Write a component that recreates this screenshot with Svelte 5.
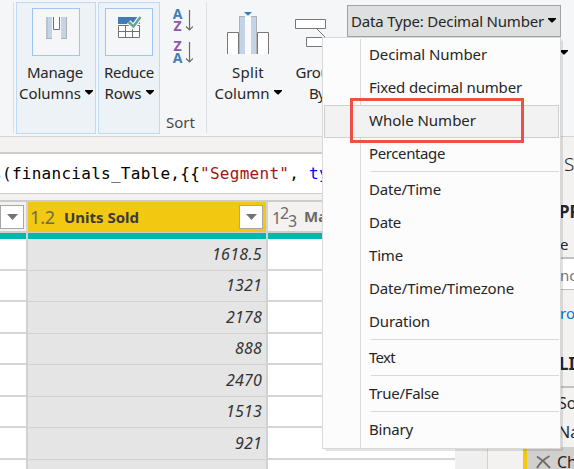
<script>
  // Spreads or tightens a label so that it takes up exactly the given width.
  function fit(node, width) {
    const natural = node.getBoundingClientRect().width;
    const count = node.textContent.length;
    if (count) node.style.letterSpacing = `${(width - natural) / count}px`;
  }

  const menu = [
    { label: 'Decimal Number', w: 118 },
    { label: 'Fixed decimal number', w: 153 },
    { label: 'Whole Number', w: 107, active: true },
    { label: 'Percentage', w: 76 },
    null,
    { label: 'Date/Time', w: 72 },
    { label: 'Date', w: 32 },
    { label: 'Time', w: 34 },
    { label: 'Date/Time/Timezone', w: 145 },
    { label: 'Duration', w: 61 },
    null,
    { label: 'Text', w: 26 },
    null,
    { label: 'True/False', w: 70 },
    null,
    { label: 'Binary', w: 44 }
  ];

  const rows = [
    { v: '1618.5', w: 50 },
    { v: '1321', w: 36 },
    { v: '2178', w: 36 },
    { v: '888', w: 27 },
    { v: '2470', w: 36 },
    { v: '1513', w: 36 },
    { v: '921', w: 27 },
    { v: '', w: 0 }
  ];
</script>

{#snippet caret()}
  <svg class="caret" width="8" height="5" viewBox="0 0 8 5"><path d="M0 0h8v1L4.5 4.5h-1L0 1z" fill="#000" /></svg>
{/snippet}

{#snippet filter()}
  <span class="filter"><svg width="11" height="6" viewBox="0 0 11 6"><path d="M0 0h11L5.5 6z" fill="#737373" /></svg></span>
{/snippet}

{#snippet sort(first, second)}
  <div class="sort-icon">
    <div class="letters"><b class={first}>{first}</b><b class={second}>{second}</b></div>
    <svg width="8" height="23" viewBox="0 0 8 23"><path d="M4.5 1v20M1 17.5l3.5 3.5L8 17.5" fill="none" stroke="#6a6a6a" stroke-width="1.2" /></svg>
  </div>
{/snippet}

<div class="page">
  <header class="ribbon">
    <div class="edge"></div>
    <div class="tile manage">
      <div class="icon-box">
        <svg width="46" height="46" viewBox="0 0 46 46">
          <path d="M13 8h6v22h-6zM28 8h6v22h-6z" fill="#c3d3e8" />
          <path d="M14 8v22M13 29.5h6M33.5 8v22M28 29.5h6" stroke="#b1b1b1" fill="none" />
          <path d="M20.5 8v12.5h6V8" fill="#fff" stroke="#6f6f6f" />
        </svg>
      </div>
      <div class="line"><span use:fit={56}>Manage</span></div>
      <div class="line"><span use:fit={62}>Columns</span>{@render caret()}</div>
    </div>
    <div class="tile reduce">
      <div class="icon-box">
        <svg width="46" height="46" viewBox="0 0 46 46">
          <path d="M12 8h22v7H12z" fill="#427bb5" />
          <path d="M12.5 16.5h21v12h-21zM12.5 22.5h21M19.5 16.5v12M26.5 16.5v12" fill="#fff" stroke="#717171" />
          <path d="M22.5 13l5 4.5 7-9.5" fill="none" stroke="#f4f6f8" stroke-width="5" />
          <path d="M22.5 13l5 4.5 7-9.5" fill="none" stroke="#63a58d" stroke-width="2.4" />
        </svg>
      </div>
      <div class="line"><span use:fit={50}>Reduce</span></div>
      <div class="line"><span use:fit={37}>Rows</span>{@render caret()}</div>
    </div>
    <div class="sort-group">
      {@render sort('A', 'Z')}
      {@render sort('Z', 'A')}
      <span class="group-name" use:fit={29}>Sort</span>
    </div>
    <div class="edge"></div>
    <div class="plain split">
      <svg width="42" height="42" viewBox="0 0 42 42">
        <path d="M.5 42V20.500h11V42M30.500 42V20.500h11V42" fill="#fff" stroke="#777" />
        <path d="M12 4h6v38h-6zM24 4h6v38h-6z" fill="#c3d3e8" />
        <path d="M18 5h6v37h-6z" fill="#fafafa" />
        <path d="M12.500 42V4.500H18M24 4.500h5.500V42" fill="none" stroke="#b1b1b1" />
        <path d="M17 0h8l-4 3.800z" fill="#3c7bb8" />
      </svg>
      <div class="line"><span use:fit={32}>Split</span></div>
      <div class="line"><span use:fit={55}>Column</span>{@render caret()}</div>
    </div>
    <div class="plain group">
      <svg width="44" height="42" viewBox="0 0 44 42">
        <path d="M22 17l10 10" stroke="#777" />
        <path d="M.5 7.500h30v9H.5zM11.500 25.500h30v9h-30z" fill="#fff" stroke="#777" />
      </svg>
      <div class="line"><span use:fit={43}>Group</span></div>
      <div class="line"><span use:fit={16}>By</span></div>
    </div>
    <div class="typing">
      <div class="type-button"><span use:fit={193}>Data Type: Decimal Number</span>{@render caret()}</div>
      <div class="second-caret">{@render caret()}</div>
    </div>
  </header>

  <main>
    <section class="left">
      <div class="formula"><i>s</i>(financials_Table,&#123;&#123;<em>"Segment"</em>, <strong>type</strong></div>
      <div class="sheet">
        <div class="col narrow">
          <div class="head">{@render filter()}</div>
          <div class="teal"></div>
          {#each rows as _}<div class="cell"></div>{/each}
        </div>
        <div class="col units">
          <div class="head">
            <span class="kind" use:fit={25}>1.2</span>
            <span class="name" use:fit={75}>Units Sold</span>
            {@render filter()}
          </div>
          <div class="teal"></div>
          {#each rows as r}<div class="cell"><span use:fit={r.w}>{r.v}</span></div>{/each}
        </div>
        <div class="col next">
          <div class="head">
            <span class="kind whole"><span>1</span><span class="up">2</span><span class="down">3</span></span>
            <span class="name">Manufacturing</span>
          </div>
          <div class="teal"></div>
          {#each rows as _}<div class="cell"></div>{/each}
        </div>
        <div class="scroll"></div>
      </div>
    </section>
    <aside>
      <div class="title">Settings</div>
      <div class="caps props">PROPERTIES</div>
      <div class="field-name">e</div>
      <div class="field">ncials</div>
      <div class="link">roperties</div>
      <div class="caps steps">LIED STEPS</div>
      <div class="step">Source</div>
      <div class="step">Navigation</div>
      <div class="step current">
        <svg width="15" height="14" viewBox="0 0 15 14"><path d="M1 1.500C5 4 10 8 14 13M13.500 1C9 3.500 4 8 1 13" fill="none" stroke="#6d6c6b" stroke-width="2" /></svg>
        <span>Changed</span>
      </div>
    </aside>
  </main>

  <div class="menu">
    {#each menu as item}
      {#if item}
        <div class="item" class:active={item.active}><span use:fit={item.w}>{item.label}</span></div>
      {:else}
        <div class="sep"></div>
      {/if}
    {/each}
  </div>
  <div class="callout"></div>
</div>

<style>
  .page {
    position: relative;
    width: 574px;
    height: 469px;
    overflow: hidden;
    background: #f3f2f1;
    color: #262626;
    font: 15px/21px "Noto Sans", "Open Sans", sans-serif;
    white-space: nowrap;
  }
  .page :global(*) { box-sizing: border-box; }
  svg { display: block; flex: none; }
  span { display: inline-block; flex: none; }

  .ribbon {
    display: flex;
    align-items: flex-start;
    height: 137px;
    padding: 2px 0 0 13px;
    background: #f5f6f8;
    border-bottom: 1px solid #d4d4d4;
    overflow: hidden;
  }
  .edge { flex: none; width: 1px; height: 131px; background: #dedfe1; }
  .tile {
    flex: none;
    display: flex;
    flex-direction: column;
    align-items: center;
    height: 132px;
    padding-top: 5px;
    background: #edf2f6;
    border: 1px solid #bddaf6;
  }
  .manage { width: 80px; margin-left: 2px; }
  .reduce { width: 62px; margin-left: 2px; }
  .icon-box { width: 48px; height: 48px; margin-bottom: 6px; border: 1px solid #9cc6f1; background: #f4f6f8; }
  .line { display: flex; justify-content: center; align-items: center; gap: 4px; height: 21px; }
  .manage .line { margin-left: -2px; }
  .manage .line:last-child { margin-left: 0; }
  .reduce .line:last-child { margin-left: 0; }
  .caret { margin-top: -3px; }

  .sort-group { flex: none; width: 46px; height: 134px; padding: 6px 0 0 12px; }
  .sort-icon { display: flex; align-items: center; gap: 2px; height: 24px; margin-bottom: 8px; }
  .letters { display: flex; flex-direction: column; align-items: center; width: 11px; font-size: 14px; line-height: 12px; }
  .A { color: #457eb5; }
  .Z { color: #8c58ae; }
  .group-name { margin: 40px 0 0 -6px; color: #4a4a4a; }
  .plain { flex: none; display: flex; flex-direction: column; align-items: center; padding-top: 10px; }
  .plain svg:first-child { margin-bottom: 8px; }
  .split { width: 82px; }
  .group { width: 56px; padding-left: 0; }
  .typing { flex: none; margin-left: 2px; padding-top: 3px; }
  .type-button {
    display: flex;
    align-items: center;
    gap: 4px;
    width: 214px;
    height: 32px;
    padding: 0 0 0 3px;
    background: #dee0e0;
    border: 1px solid #a0a3a5;
  }
  .type-button .caret { margin-top: -2px; }
  .second-caret { display: flex; justify-content: flex-end; width: 221px; padding-top: 16px; }

  main { display: flex; height: 332px; }
  .left { flex: none; display: flex; flex-direction: column; width: 488px; padding-top: 15px; border-right: 1px solid #d3d2d1; }
  .formula {
    height: 42px;
    margin-bottom: 6px;
    background: #fff;
    border-top: 2px solid #ccc;
    border-bottom: 1px solid #ccc;
    color: #000;
    font: 16px/40px "DejaVu Sans Mono", monospace;
    letter-spacing: .27px;
    overflow: hidden;
  }
  .formula i { display: inline-block; width: 2px; overflow: hidden; vertical-align: top; direction: rtl; color: #267f99; font-style: normal; }
  .formula em { color: #a31515; font-style: normal; }
  .formula strong { color: #00f; font-weight: 400; }
  .sheet { display: flex; height: 269px; overflow: hidden; background: #efefef; border-top: 2px solid #ccc; }
  .col { flex: none; border-right: 2px solid #d2d2d2; }
  .narrow { width: 28px; }
  .units { width: 240px; }
  .next { width: 187px; border-right: 0; }
  .head {
    display: flex;
    align-items: center;
    height: 31px;
    background: #f3f2f1;
    border-bottom: 2px solid #cecece;
    color: #6a6a6a;
  }
  .units .head { padding: 0 3px 0 2px; background: #f2c811; border-bottom-width: 1px; }
  .filter {
    display: flex;
    align-items: center;
    justify-content: center;
    width: 24px;
    height: 24px;
    margin-left: auto;
    background: #fff;
    border: 1px solid #a6a6a6;
  }
  .narrow .filter { margin-right: 4px; }
  .kind { font-size: 18px; color: #706a4a; }
  .name { font-size: 15px; font-weight: 700; }
  .units .name { margin-left: 9px; color: #3b3a39; }
  .next .head { padding-left: 4px; }
  .next .name { margin-left: 8px; }
  .whole { display: flex; align-items: center; width: 24px; color: #6a6a6a; font-size: 16px; line-height: 14px; letter-spacing: -1.2px; }
  .whole span { margin-top: 2px; }
  .whole .up { margin-top: -7px; }
  .whole .down { margin-top: 8px; }
  .teal { height: 6px; background: #01b8aa; }
  .cell { height: 31.5px; background: #fff; border-bottom: 2px solid #d5d5d5; }
  .units .cell {
    display: flex;
    align-items: center;
    justify-content: flex-end;
    padding-right: 4px;
    background: #e5e5e5;
    border-bottom: 1px solid #d2d2d2;
    color: #333;
    font-style: italic;
    font-size: 16px;
  }
  .scroll { flex: 1; background: #efefef; }

  aside { flex: 1; display: flex; flex-direction: column; min-width: 0; padding-left: 35px; overflow: hidden; }
  aside > div { flex: none; }
  .title { height: 54px; padding: 17px 0 0 41px; font-size: 19px; font-weight: 300; }
  .caps { font-size: 17px; font-weight: 700; }
  .props { height: 43px; padding: 10px 0 0 36px; }
  .field-name { height: 23px; padding-left: 37px; }
  .field { height: 33px; padding: 6px 0 0 37px; margin-right: -20px; background: #fff; border-top: 2px solid #c2c1c0; border-bottom: 1px solid #c2c1c0; color: #777; line-height: 20px; }
  .link { height: 37px; padding: 13px 0 0 37px; color: #0078d4; }
  .steps { height: 61px; margin-bottom: 1px; padding: 26px 0 0 36px; border-bottom: 2px solid #c3c2c1; }
  .step { height: 29px; padding: 2px 0 0 35px; font-size: 16px; line-height: 24px; }
  .current { display: flex; align-items: center; gap: 6px; padding: 0 0 0 9px; background: #d2d0ce; border-left: 4px solid #f2c811; }

  .menu {
    position: absolute;
    left: 322px;
    top: 37px;
    width: 239px;
    height: 412px;
    padding: 1px 1px 0;
    background: linear-gradient(#dadada, #dadada) 37px 1px / 1px 409px no-repeat #fcfcfc;
    border: 1px solid #d9d9d9;
    box-shadow: 3px 3px 0 -1px rgba(0, 0, 0, .07), 2px 2px 0 rgba(0, 0, 0, .04);
  }
  .item { display: flex; align-items: center; height: 33px; padding: 0 0 2px 45px; }
  .active { border: 1px solid #cfcfcf; background: #f2f2f2; padding-left: 44px; }
  .sep { height: 3px; margin-left: 47px; border-top: 1px solid #d8d8d8; }
  .callout { position: absolute; left: 350px; top: 98px; width: 174px; height: 45px; border: 3px solid #ed5045; }
</style>
